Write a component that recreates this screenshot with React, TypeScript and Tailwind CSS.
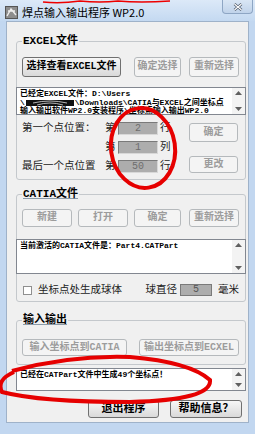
import React from 'react';

const cjk = "font-['Liberation_Mono','Noto_Sans_CJK_SC',monospace]";

function Btn({ label, disabled, className = '' }: { label: string; disabled?: boolean; className?: string }) {
  return (
    <div
      className={`flex shrink-0 items-center justify-center rounded-[3px] border text-[10px] leading-none ${
        disabled
          ? 'border-[#b5b9bc] bg-[#f4f4f4] font-bold text-[#9c9c9c]'
          : 'border-[#707070] bg-linear-to-b from-[#f7f7f7] to-[#d9d9d9] font-bold text-black'
      } ${className}`}
    >
      {label}
    </div>
  );
}

function ScrollBar() {
  return (
    <div className="flex w-[13px] shrink-0 flex-col items-center justify-between bg-[#f3f3f3] py-[3px]">
      <svg width="7" height="4" viewBox="0 0 7 4">
        <path d="M0 4 L3.5 0 L7 4 Z" fill="#606060" />
      </svg>
      <svg width="7" height="4" viewBox="0 0 7 4">
        <path d="M0 0 L3.5 4 L7 0 Z" fill="#606060" />
      </svg>
    </div>
  );
}

function Memo({ children, className = '' }: { children: React.ReactNode; className?: string }) {
  return (
    <div className={`flex border border-[#828790] bg-white ${className}`}>
      <div className="min-w-0 flex-1 overflow-hidden whitespace-nowrap px-[3px] pt-[2px] text-[8px] font-bold leading-[8.5px] text-black">
        {children}
      </div>
      <ScrollBar />
    </div>
  );
}

function NumBox({ value }: { value: string }) {
  return (
    <div className="flex h-[13px] w-[40px] items-center justify-center border border-t-[#7a7a7a] border-l-[#7a7a7a] border-r-[#d8d8d8] border-b-[#d8d8d8] bg-[#adadad] text-[10px] leading-none text-[#6e6e6e]">
      {value}
    </div>
  );
}

function PointRow({ label, value, unit }: { label: string; value: string; unit: string }) {
  return (
    <div className="flex h-[13px] items-center">
      <span className="w-[83px] text-[10.5px] leading-none text-[#222]">{label}</span>
      <span className="w-[13px] text-[10.5px] leading-none text-[#222]">第</span>
      <NumBox value={value} />
      <span className="ml-[2px] text-[10.5px] leading-none text-[#222]">{unit}</span>
    </div>
  );
}

function Group({
  title,
  underline,
  className = '',
  children,
}: {
  title: string;
  underline?: boolean;
  className?: string;
  children: React.ReactNode;
}) {
  return (
    <fieldset className={`m-0 w-[230px] min-w-0 rounded-[3px] border border-[#c4c8cc] p-0 ${className}`}>
      <legend
        className={`ml-[5px] px-[1px] text-[11px] font-bold leading-[12px] text-black ${
          underline ? 'underline decoration-[#8a9aa8] underline-offset-1' : ''
        }`}
      >
        {title}
      </legend>
      {children}
    </fieldset>
  );
}

export default function App() {
  return (
    <div className={`relative flex h-[434px] w-[255px] flex-col overflow-hidden bg-[#c2d7f0] ${cjk}`}>
      {/* title bar */}
      <div className="flex h-[21px] shrink-0 items-start justify-between bg-linear-to-b from-[#dce9f8] to-[#c4d9f1]">
        <div className="mt-[6px] flex items-center">
          <svg width="13" height="13" viewBox="0 0 13 13" className="ml-[5px]">
            <rect x="0.5" y="0.5" width="12" height="12" fill="#8d8d8d" stroke="#555" />
            <path d="M2 10 L6 3 L11 9 M3 5 L10 5" stroke="#eee" strokeWidth="1.4" fill="none" />
          </svg>
          <span className="ml-[4px] font-['Noto_Sans_CJK_SC',sans-serif] text-[11px] leading-none text-black">
            焊点输入输出程序 WP2.0
          </span>
        </div>
        <div className="mr-[2px] flex h-[14px] w-[31px] items-center justify-center rounded-b-[4px] border border-t-0 border-[#8ea6c4] bg-linear-to-b from-[#d9e6f5] to-[#c0d3ea]">
          <svg width="10" height="8" viewBox="0 0 10 8">
            <path d="M1.5 1 L8.5 7 M8.5 1 L1.5 7" stroke="#4a5566" strokeWidth="2.6" />
            <path d="M1.5 1 L8.5 7 M8.5 1 L1.5 7" stroke="#ffffff" strokeWidth="1.2" />
          </svg>
        </div>
      </div>

      {/* client area */}
      <div className="mx-[6px] flex h-[402px] flex-col border border-[#9fb2c9] bg-[#f0f0f0] pl-[9px] pr-[3px]">
        <Group title="EXCEL文件" className="mt-[13px] pb-[6px]">
          <div className="mt-[10px] flex pl-[5px]">
            <Btn label="选择查看EXCEL文件" className="h-[20px] w-[99px]" />
            <Btn label="确定选择" disabled className="ml-[13px] h-[20px] w-[47px]" />
            <Btn label="重新选择" disabled className="ml-[8px] h-[20px] w-[50px]" />
          </div>
          <Memo className="-mx-px mt-[10px] h-[28px]">
            <div>已经定EXCEL文件：D:\Users</div>
            <div className="flex items-center">
              <span>\</span>
              <svg width="50" height="8" viewBox="0 0 50 8" className="shrink-0">
                <path d="M1 1 L49 1 L49 7 L1 7 Z" fill="#111" />
                <path d="M8 4 Q25 0 42 4 M12 6 Q25 2 38 6" stroke="#ddd" strokeWidth="0.8" fill="none" />
              </svg>
              <span>\Downloads\CATIA与EXCEL之间坐标点</span>
            </div>
            <div>输入输出软件WP2.0安装程序\坐标点输入输出WP2.0</div>
          </Memo>
          <div className="mt-[7px] flex pl-[5px]">
            <div className="flex w-[167px] flex-col gap-[6px]">
              <PointRow label="第一个点位置：" value="2" unit="行" />
              <PointRow label="" value="1" unit="列" />
              <PointRow label="最后一个点位置" value="50" unit="行" />
            </div>
            <div className="flex flex-col">
              <Btn label="确定" disabled className="mt-px h-[19px] w-[49px]" />
              <Btn label="更改" disabled className="mt-[14px] h-[17px] w-[49px]" />
            </div>
          </div>
        </Group>

        <Group title="CATIA文件" underline className="mt-[8px] pb-[5px]">
          <div className="mt-[9px] flex pl-[5px]">
            <Btn label="新建" disabled className="h-[18px] w-[50px]" />
            <Btn label="打开" disabled className="ml-[6px] h-[18px] w-[50px]" />
            <Btn label="确定" disabled className="ml-[6px] h-[18px] w-[47px]" />
            <Btn label="重新选择" disabled className="ml-[8px] h-[18px] w-[50px]" />
          </div>
          <Memo className="-mx-px mt-[12px] h-[35px]">
            <div>当前激活的CATIA文件是：Part4.CATPart</div>
          </Memo>
          <div className="mt-[10px] flex h-[12px] items-center pl-[6px] text-[10.5px] leading-none text-[#222]">
            <div className="h-[9px] w-[9px] border border-[#8f8f8f] bg-white" />
            <span className="ml-[6px]">坐标点处生成球体</span>
            <span className="ml-auto">球直径</span>
            <div className="ml-[3px] flex h-[12px] w-[32px] items-center justify-center border border-[#7a7a7a] bg-[#adadad] text-[10px] text-[#555]">
              5
            </div>
            <span className="ml-[6px] mr-[6px]">毫米</span>
          </div>
        </Group>

        <Group title="输入输出" underline className="mt-[12px] pb-[8px]">
          <div className="mt-[13px] flex pl-[5px]">
            <Btn label="输入坐标点到CATIA" disabled className="h-[17px] w-[105px]" />
            <Btn label="输出坐标点到ECXEL" disabled className="ml-[12px] h-[17px] w-[100px]" />
          </div>
        </Group>

        <Memo className="mt-[3px] h-[23px] w-[230px]">
          <div>已经在CATPart文件中生成49个坐标点！</div>
        </Memo>

        <div className="mt-[9px] flex">
          <Btn label="退出程序" className="ml-[72px] h-[18px] w-[71px] text-[11px]" />
          <Btn label="帮助信息？" className="ml-[11px] h-[18px] w-[72px] text-[11px]" />
        </div>
      </div>

      {/* red hand-drawn annotations */}
      <svg className="pointer-events-none absolute inset-0" width="255" height="434" viewBox="0 0 255 434">
        <path d="M43 2 Q60 4 80 1 Q100 3 118 1 Q140 3 170 1" stroke="#e00" strokeWidth="1.5" fill="none" />
        <ellipse cx="143" cy="148" rx="32" ry="40" transform="rotate(-8 143 148)" stroke="#e60000" strokeWidth="4" fill="none" />
        <path
          d="M12 371 Q70 355 130 357 Q190 362 210 380 Q212 400 130 402 Q40 402 2 392 Q-4 380 14 372"
          stroke="#e60000"
          strokeWidth="4"
          fill="none"
        />
      </svg>
    </div>
  );
}
